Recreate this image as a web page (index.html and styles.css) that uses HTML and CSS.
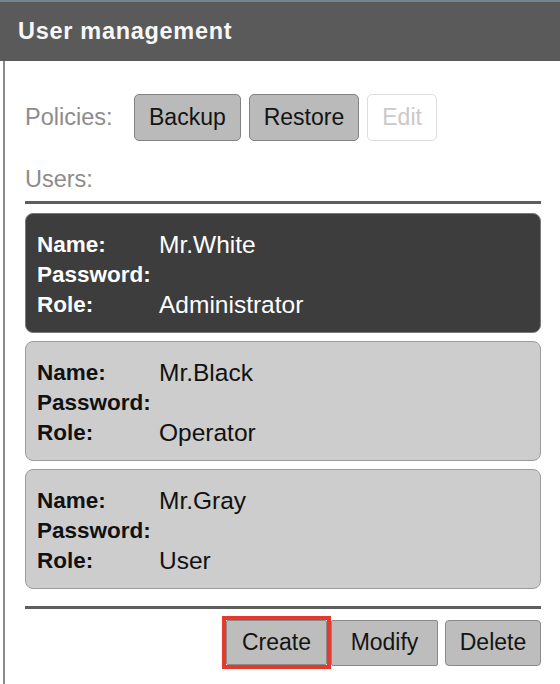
FILE: index.html
```html
<!DOCTYPE html>
<html>
<head>
<meta charset="utf-8">
<title>User management</title>
<link rel="stylesheet" href="styles.css">
</head>
<body>
<div class="window">
  <div class="topstrip"></div>
  <div class="header">User management</div>
  <div class="content">
    <div class="policies">
      <span class="label">Policies:</span>
      <div class="btn-group">
        <button class="btn">Backup</button>
        <button class="btn">Restore</button>
        <button class="btn btn-disabled">Edit</button>
      </div>
    </div>
    <div class="users-label label">Users:</div>
    <div class="separator"></div>
    <div class="user-list">
      <div class="user-card selected">
        <span class="key">Name:</span><span class="val">Mr.White</span>
        <span class="key">Password:</span><span class="val"></span>
        <span class="key">Role:</span><span class="val">Administrator</span>
      </div>
      <div class="user-card">
        <span class="key">Name:</span><span class="val">Mr.Black</span>
        <span class="key">Password:</span><span class="val"></span>
        <span class="key">Role:</span><span class="val">Operator</span>
      </div>
      <div class="user-card">
        <span class="key">Name:</span><span class="val">Mr.Gray</span>
        <span class="key">Password:</span><span class="val"></span>
        <span class="key">Role:</span><span class="val">User</span>
      </div>
    </div>
    <div class="separator bottom-sep"></div>
    <div class="actions">
      <span class="highlight"><button class="act act-create">Create</button></span>
      <button class="act act-modify">Modify</button>
      <button class="act act-delete">Delete</button>
    </div>
  </div>
</div>
</body>
</html>
```
FILE: styles.css
```css
* { box-sizing: border-box; }
html, body { margin: 0; padding: 0; background: #ffffff; }
body {
  font-family: "Liberation Sans", Arial, sans-serif;
  width: 560px;
  height: 684px;
  overflow: hidden;
}
.window { display: flex; flex-direction: column; height: 684px; }
.topstrip { height: 2px; background: #74818f; }
.header {
  height: 59px;
  line-height: 59px;
  background: #5a5a5a;
  color: #f7f7f7;
  font-weight: bold;
  font-size: 23.5px;
  padding-left: 18px;
  letter-spacing: 0.7px;
}
.content {
  flex: 1;
  margin-left: 3px;
  border-left: 2px solid #8a8a8a;
  padding: 33px 19px 0 20px;
  display: flex;
  flex-direction: column;
}
.label { color: #8c8c8c; font-size: 23.5px; }
.policies { display: flex; align-items: center; height: 47px; }
.policies .label { width: 109px; flex: none; }
.btn-group { display: flex; gap: 8px; }
.btn {
  height: 47px;
  padding: 0 14px;
  font-family: inherit;
  font-size: 23px;
  color: #141414;
  background: #bababa;
  border: 1px solid #838383;
  border-radius: 5px;
}
.btn-disabled { background: #ffffff; border-color: #dddddd; color: #c9c9c9; }
.users-label { margin-top: 24px; line-height: 28px; }
.separator { height: 3px; background: #5e5e5e; margin-top: 8px; }
.user-list { display: flex; flex-direction: column; gap: 8px; margin-top: 9px; }
.user-card {
  display: grid;
  grid-template-columns: 122px auto;
  grid-auto-rows: 30px;
  padding: 16px 13px 12px 11px;
  border-radius: 8px;
  background: #cdcdcd;
  border: 1px solid #9c9c9c;
  color: #111111;
  line-height: 30px;
}
.user-card.selected { background: #3d3d3d; border-color: #7a7a7a; color: #ffffff; }
.key { font-weight: bold; font-size: 22.5px; white-space: nowrap; }
.val { font-size: 24.5px; }
.bottom-sep { margin-top: 17px; }
.actions { display: flex; justify-content: flex-end; align-items: center; margin-top: 7px; }
.highlight { display: flex; border: 4px solid #e5392b; }
.act {
  height: 46px;
  font-family: inherit;
  font-size: 23px;
  color: #141414;
  background: #bdbdbd;
  border: 1px solid #8a8a8a;
  border-radius: 2px;
  padding: 0;
}
.act-create { width: 101px; height: 45px; }
.act-modify { width: 107px; }
.act-delete { width: 96px; margin-left: 7px; border-radius: 4px; }
```
